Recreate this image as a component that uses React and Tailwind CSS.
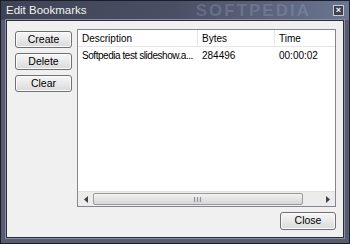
import React from "react";

const font = { fontFamily: '"Liberation Sans", Arial, sans-serif' };

const Btn = ({ children, className = "" }) => (
    <div
        className={`flex items-center justify-center h-[17px] rounded-[3px] border border-[#707070] bg-gradient-to-b from-[#f6f6f6] via-[#e9e9e9] to-[#d9d9d9] text-[10.5px] text-black shadow-[inset_0_0_0_1px_#fcfcfc] ${className}`}
    >
        {children}
    </div>
);

const App = () => {
    return (
        <div className="w-[350px] h-[244px] relative overflow-hidden bg-[#575c70] border border-[#1b1e2a]" style={font}>
            {/* Title bar */}
            <div className="h-[19px] flex items-center justify-between pl-[5px] pr-[5px] bg-gradient-to-r from-[#3e4354] via-[#4a5064] to-[#6a7590]">
                <span className="text-[11.5px] text-[#f2f2f2] leading-none">Edit Bookmarks</span>
                <span className="text-[17px] font-bold tracking-[2px] text-[#a9b5d4]/25 blur-[0.6px] ml-auto mr-[22px]">SOFTPEDIA</span>
                <div className="w-[11px] h-[11px] border border-[#c9ccd6] bg-[#3b3f50] flex items-center justify-center text-[9px] leading-none text-white font-bold">
                    ×
                </div>
            </div>

            {/* Client area */}
            <div className="absolute left-[5px] top-[19px] right-[5px] bottom-[5px] border border-[#2a2d3b] shadow-[0_0_0_1px_#8a8ea2]">
                <div className="w-full h-full bg-[#f0f0f0] flex flex-col">
                    <div className="flex">
                        <div className="flex flex-col w-[57px] ml-[8px] mt-[10px] gap-[5px]">
                            <Btn>Create</Btn>
                            <Btn>Delete</Btn>
                            <Btn>Clear</Btn>
                        </div>

                        {/* List view */}
                        <div className="ml-[5px] mt-[8px] w-[259px] h-[178px] border border-[#828790] bg-white flex flex-col">
                            <div className="flex h-[17px] border-b border-[#e5e5e5] text-[10px] text-black">
                                <div className="w-[120px] pl-[4px] flex items-center border-r border-[#e5e5e5]">Description</div>
                                <div className="w-[77px] pl-[4px] flex items-center border-r border-[#e5e5e5]">Bytes</div>
                                <div className="flex-1 pl-[4px] flex items-center">Time</div>
                            </div>
                            <div className="flex h-[16px] text-[10px] text-black">
                                <div className="w-[121px] pl-[4px] pr-[2px] flex items-center whitespace-nowrap tracking-[-0.45px]">Softpedia test slideshow.a...</div>
                                <div className="w-[77px] pl-[3px] flex items-center">284496</div>
                                <div className="flex-1 pl-[3px] flex items-center">00:00:02</div>
                            </div>
                            <div className="flex-1" />

                            {/* Horizontal scrollbar */}
                            <div className="h-[15px] flex bg-[#ececec] border-t border-[#e0e0e0]">
                                <div className="w-[15px] flex items-center justify-center">
                                    <svg width="4" height="7" viewBox="0 0 4 7"><path d="M4 0 L0 3.5 L4 7 Z" fill="#404040" /></svg>
                                </div>
                                <div className="w-[210px] my-[1px] rounded-[2px] border border-[#9a9a9a] bg-gradient-to-b from-[#f3f3f3] to-[#d6d6d6] flex items-center justify-center">
                                    <span className="text-[7px] leading-none text-[#555] tracking-[1px]">III</span>
                                </div>
                                <div className="flex-1" />
                                <div className="w-[15px] flex items-center justify-center">
                                    <svg width="4" height="7" viewBox="0 0 4 7"><path d="M0 0 L4 3.5 L0 7 Z" fill="#404040" /></svg>
                                </div>
                            </div>
                        </div>
                    </div>

                    <div className="flex justify-end pr-[7px] mt-[5px]">
                        <Btn className="w-[56px] h-[18px]">Close</Btn>
                    </div>
                </div>
            </div>
        </div>
    );
};

export default App;
